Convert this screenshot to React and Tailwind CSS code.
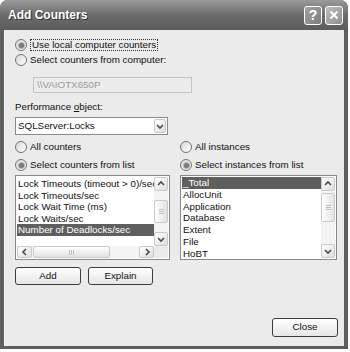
import React from "react";

const font = { fontFamily: '"Liberation Sans", Arial, sans-serif' };

const Radio = ({ checked }) => (
  <span className="w-[12px] h-[12px] rounded-full border border-[#727272] bg-gradient-to-br from-[#d8d8d8] to-white flex items-center justify-center shrink-0">
    {checked && <span className="w-[5px] h-[5px] rounded-full bg-[#7a7a7a] ring-1 ring-[#b5b5b5]" />}
  </span>
);

const RadioRow = ({ checked, label, focus }) => (
  <div className="flex items-center h-[12px] gap-[3px]">
    <Radio checked={checked} />
    <span className={focus ? "border border-dotted border-[#333] px-[1px] leading-[10px]" : "leading-[12px]"}>
      {label}
    </span>
  </div>
);

const Chevron = ({ dir }) => {
  const d = {
    up: "M2 6 L5 3 L8 6",
    down: "M2 4 L5 7 L8 4",
    left: "M6 2 L3 5 L6 8",
    right: "M4 2 L7 5 L4 8",
  }[dir];
  return (
    <svg width="10" height="10" viewBox="0 0 10 10">
      <path d={d} fill="none" stroke="#4a4a4a" strokeWidth="1.6" />
    </svg>
  );
};

const SbButton = ({ dir, className }) => (
  <div className={"rounded-[2px] border border-[#c9c9c9] bg-gradient-to-br from-white to-[#dedede] flex items-center justify-center " + className}>
    <Chevron dir={dir} />
  </div>
);

const VScroll = ({ thumbTop, thumbH }) => (
  <div className="w-[14px] h-full bg-[#f4f4f4] flex flex-col">
    <SbButton dir="up" className="h-[14px]" />
    <div className="flex-1">
      <div
        className="rounded-[2px] border border-[#c9c9c9] bg-gradient-to-r from-white to-[#e2e2e2] flex flex-col items-center justify-center gap-[1px]"
        style={{ marginTop: thumbTop, height: thumbH }}
      >
        <span className="w-[5px] h-px bg-[#c0c0c0]" />
        <span className="w-[5px] h-px bg-[#c0c0c0]" />
        <span className="w-[5px] h-px bg-[#c0c0c0]" />
      </div>
    </div>
    <SbButton dir="down" className="h-[14px]" />
  </div>
);

const XpButton = ({ children, className }) => (
  <div className={"rounded-[3px] border border-[#3c3c3c] bg-gradient-to-b from-white to-[#e6e6e6] flex items-center justify-center text-[#111] " + className}>
    {children}
  </div>
);

export default function App() {
  const counters = [
    "Lock Timeouts (timeout > 0)/sec",
    "Lock Timeouts/sec",
    "Lock Wait Time (ms)",
    "Lock Waits/sec",
    "Number of Deadlocks/sec",
  ];
  const instances = ["_Total", "AllocUnit", "Application", "Database", "Extent", "File", "HoBT"];

  return (
    <div className="w-[350px] h-[352px] bg-white overflow-hidden" style={font}>
      <div className="w-[348px] h-[349px] rounded-t-[8px] bg-[#5e5e5e] flex flex-col overflow-hidden">
        {/* title bar */}
        <div className="h-[30px] shrink-0 bg-gradient-to-b from-[#9a9a9a] via-[#6c6c6c] to-[#5c5c5c] flex items-center pl-[8px] pr-[5px]">
          <span className="text-white font-bold text-[12px] [text-shadow:1px_1px_0_#333]">Add Counters</span>
          <div className="ml-auto flex gap-[3px]">
            <div className="w-[18px] h-[19px] rounded-[3px] border border-white bg-gradient-to-br from-[#a5a5a5] to-[#7a7a7a] flex items-center justify-center text-white font-bold text-[14px] leading-none">?</div>
            <div className="w-[18px] h-[19px] rounded-[3px] border border-white bg-gradient-to-br from-[#bdbdbd] to-[#8e8e8e] flex items-center justify-center">
              <svg width="10" height="10" viewBox="0 0 10 10">
                <path d="M1.5 1.5 L8.5 8.5 M8.5 1.5 L1.5 8.5" stroke="white" strokeWidth="2" />
              </svg>
            </div>
          </div>
        </div>

        {/* body */}
        <div className="flex-1 mx-[4px] mb-[3px] bg-[#ebebeb] border-l border-[#f5f5f5] pl-[10px] pr-[6px] pt-[9px] text-[9.8px] text-[#111] flex flex-col">
          <RadioRow checked label="Use local computer counters" focus />
          <div className="mt-[3px]">
            <RadioRow label="Select counters from computer:" />
          </div>
          <div className="mt-[11px] ml-[18px] w-[159px] h-[16px] border border-[#c4c4c4] bg-[#ececec] text-[#9a9a9a] flex items-center pl-[3px]">
            \\VAIOTX650P
          </div>
          <div className="mt-[8px] h-[12px] leading-[12px]">
            Performance <span className="underline">o</span>bject:
          </div>
          <div className="mt-[4px] w-[153px] h-[18px] border border-[#8a8a8a] bg-white flex items-center pl-[2px] pr-[1px]">
            <span>SQLServer:Locks</span>
            <SbButton dir="down" className="ml-auto w-[12px] h-[14px]" />
          </div>

          <div className="mt-[6px] grid grid-cols-[155px_157px] gap-x-[10px]">
            <RadioRow label="All counters" />
            <RadioRow label="All instances" />
            <div className="mt-[6px]">
              <RadioRow checked label="Select counters from list" />
            </div>
            <div className="mt-[6px]">
              <RadioRow checked label="Select instances from list" />
            </div>

            {/* counters list */}
            <div className="mt-[4px] h-[85px] border border-[#8a8a8a] bg-white p-[1px] flex flex-col">
              <div className="flex flex-1 min-h-0">
                <div className="flex-1 pt-[1px] overflow-hidden">
                  {counters.map((c, i) => (
                    <div
                      key={c}
                      className={
                        "h-[11.6px] leading-[11.6px] pl-[1px] whitespace-nowrap " +
                        (i === counters.length - 1 ? "bg-[#5f5f5f] text-white" : "")
                      }
                    >
                      {c}
                    </div>
                  ))}
                </div>
                <VScroll thumbTop={9} thumbH={23} />
              </div>
              <div className="h-[12px] flex">
                <div className="flex-1 bg-[#f4f4f4] flex">
                  <SbButton dir="left" className="w-[15px]" />
                  <div className="flex-1">
                    <div className="ml-[1px] w-[77px] h-full rounded-[2px] border border-[#c9c9c9] bg-gradient-to-b from-white to-[#e2e2e2] flex items-center justify-center gap-[1px]">
                      <span className="w-px h-[5px] bg-[#c0c0c0]" />
                      <span className="w-px h-[5px] bg-[#c0c0c0]" />
                      <span className="w-px h-[5px] bg-[#c0c0c0]" />
                    </div>
                  </div>
                  <SbButton dir="right" className="w-[15px]" />
                </div>
                <div className="w-[14px] bg-[#ebebeb]" />
              </div>
            </div>

            {/* instances list */}
            <div className="mt-[4px] h-[85px] border border-[#8a8a8a] bg-white p-[1px] flex">
              <div className="flex-1 overflow-hidden">
                {instances.map((c, i) => (
                  <div
                    key={c}
                    className={
                      "h-[11.75px] leading-[11.75px] pl-[1px] whitespace-nowrap " +
                      (i === 0 ? "bg-[#5f5f5f] text-white" : "")
                    }
                  >
                    {c}
                  </div>
                ))}
              </div>
              <VScroll thumbTop={2} thumbH={29} />
            </div>
          </div>

          <div className="mt-[7px] flex gap-[7px]">
            <XpButton className="w-[66px] h-[18px]">Add</XpButton>
            <XpButton className="w-[65px] h-[18px]">Explain</XpButton>
          </div>

          <div className="mt-auto mb-[9px] flex justify-end">
            <XpButton className="w-[66px] h-[19px]">Close</XpButton>
          </div>
        </div>
      </div>
    </div>
  );
}
